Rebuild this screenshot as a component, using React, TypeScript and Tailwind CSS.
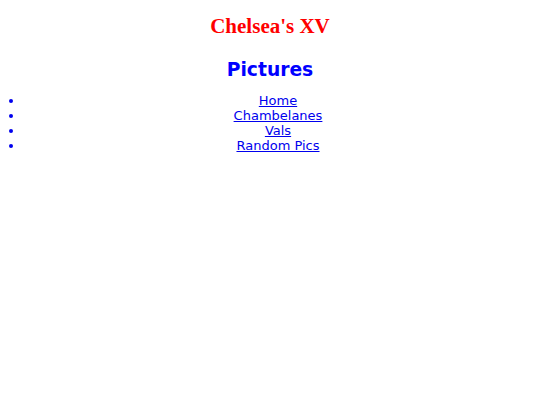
export default function App() {
  const links = ["Home", "Chambelanes", "Vals", "Random Pics"];
  return (
    <div className="bg-white min-h-[405px] px-2 pt-[12px]">
      <h1 className="text-center font-bold text-[#ff0000] text-[21px] leading-[28px] font-['Liberation_Serif',serif]">
        Chelsea's XV
      </h1>
      <h3 className="mt-[19px] text-center font-bold text-[#0000ff] text-[18.72px] leading-[22px] font-['DejaVu_Sans',sans-serif]">
        Pictures
      </h3>
      <ul className="mt-[12px] pl-4 list-disc text-[#0000ee] text-[13px] leading-[15px] font-['DejaVu_Sans',sans-serif]">
        {links.map((l) => (
          <li key={l} className="text-center">
            <a href="#" className="underline text-[#0000ee]">
              {l}
            </a>
          </li>
        ))}
      </ul>
    </div>
  );
}
